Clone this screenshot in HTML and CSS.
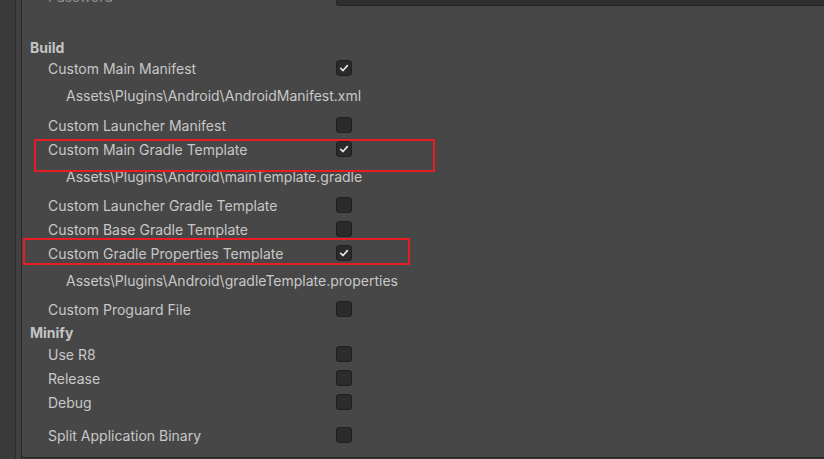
FILE: index.html
```html
<!DOCTYPE html>
<html>
<head>
<meta charset="utf-8">
<link rel="stylesheet" href="styles.css">
</head>
<body>
<div class="window">
  <div class="gutter"></div>
  <div class="inner-gutter"></div>
  <div class="panel">
    <div class="row password-row">
      <span class="label dim">Password</span>
      <div class="field"></div>
    </div>
    <div class="heading build">Build</div>
    <div class="row"><span class="label">Custom Main Manifest</span><span class="check on"><svg viewBox="0 0 16 16"><path d="M4.3 8.4 L6.9 10.9 L11.8 5.3"/></svg></span></div>
    <div class="path tall">Assets\Plugins\Android\AndroidManifest.xml</div>
    <div class="row"><span class="label">Custom Launcher Manifest</span><span class="check"></span></div>
    <div class="row"><span class="label">Custom Main Gradle Template</span><span class="check on"><svg viewBox="0 0 16 16"><path d="M4.3 8.4 L6.9 10.9 L11.8 5.3"/></svg></span></div>
    <div class="path">Assets\Plugins\Android\mainTemplate.gradle</div>
    <div class="row"><span class="label">Custom Launcher Gradle Template</span><span class="check"></span></div>
    <div class="row"><span class="label">Custom Base Gradle Template</span><span class="check"></span></div>
    <div class="row"><span class="label">Custom Gradle Properties Template</span><span class="check on"><svg viewBox="0 0 16 16"><path d="M4.3 8.4 L6.9 10.9 L11.8 5.3"/></svg></span></div>
    <div class="path">Assets\Plugins\Android\gradleTemplate.properties</div>
    <div class="row"><span class="label">Custom Proguard File</span><span class="check"></span></div>
    <div class="heading minify">Minify</div>
    <div class="row"><span class="label">Use R8</span><span class="check"></span></div>
    <div class="row"><span class="label">Release</span><span class="check"></span></div>
    <div class="row"><span class="label">Debug</span><span class="check"></span></div>
    <div class="row split"><span class="label">Split Application Binary</span><span class="check"></span></div>
  </div>
  <div class="mark mark-1"></div>
  <div class="mark mark-2"></div>
</div>
</body>
</html>
```

FILE: styles.css
```css
* { box-sizing: border-box; }
html, body {
  margin: 0;
  padding: 0;
  width: 824px;
  height: 459px;
  overflow: hidden;
  background: #383838;
}
body {
  font-family: Inter, "Noto Sans", sans-serif;
  font-size: 14px;
  color: #c8c8c8;
}
.window {
  position: relative;
  display: flex;
  height: 459px;
  overflow: hidden;
}
.gutter {
  width: 16px;
  flex: none;
  background: #3a3a3a;
  border-right: 1px solid #2c2c2c;
}
.inner-gutter {
  width: 6px;
  flex: none;
  background: #414141;
  border-right: 1px solid #2a2a2a;
}
.panel {
  flex: 1;
  height: 458px;
  background: #474747;
  border-bottom: 1px solid #252525;
  border-bottom-left-radius: 3px;
  padding-left: 8px;
  display: flex;
  flex-direction: column;
}
.row {
  height: 24px;
  display: flex;
  align-items: center;
  padding-left: 18px;
  flex: none;
}
.label {
  width: 288px;
  flex: none;
  white-space: nowrap;
  padding-top: 0;
}
.dim { color: #8c8c8c; }
.password-row {
  height: 20px;
  margin-top: -14px;
}
.field {
  flex: 1;
  height: 20px;
  background: #2f2f2f;
  border: 1px solid #262626;
  border-right: none;
  border-radius: 3px 0 0 3px;
}
.heading {
  font-weight: 700;
  color: #c4c4c4;
  height: 18px;
  line-height: 18px;
  flex: none;
  padding-top: 1px;
}
.build { margin-top: 32px; }
.minify { height: 21px; line-height: 21px; }
.path {
  height: 32px;
  line-height: 31px;
  padding-left: 36px;
  white-space: nowrap;
  flex: none;
}
.path.tall { height: 33px; line-height: 32px; }
.split { margin-top: 9px; }
.check {
  width: 16px;
  height: 16px;
  flex: none;
  background: #2b2b2b;
  border: 1px solid #1f1f1f;
  border-radius: 3px;
  display: flex;
  align-items: center;
  justify-content: center;
}
.check svg {
  width: 16px;
  height: 16px;
  display: block;
}
.check svg path {
  fill: none;
  stroke: #e4e4e4;
  stroke-width: 1.9;
  stroke-linecap: round;
  stroke-linejoin: round;
}
.mark {
  position: absolute;
  border: 2px solid #e81c24;
}
.mark-1 { left: 34px; top: 139px; width: 401px; height: 33px; }
.mark-2 { left: 23px; top: 238px; width: 387px; height: 27px; }
```
